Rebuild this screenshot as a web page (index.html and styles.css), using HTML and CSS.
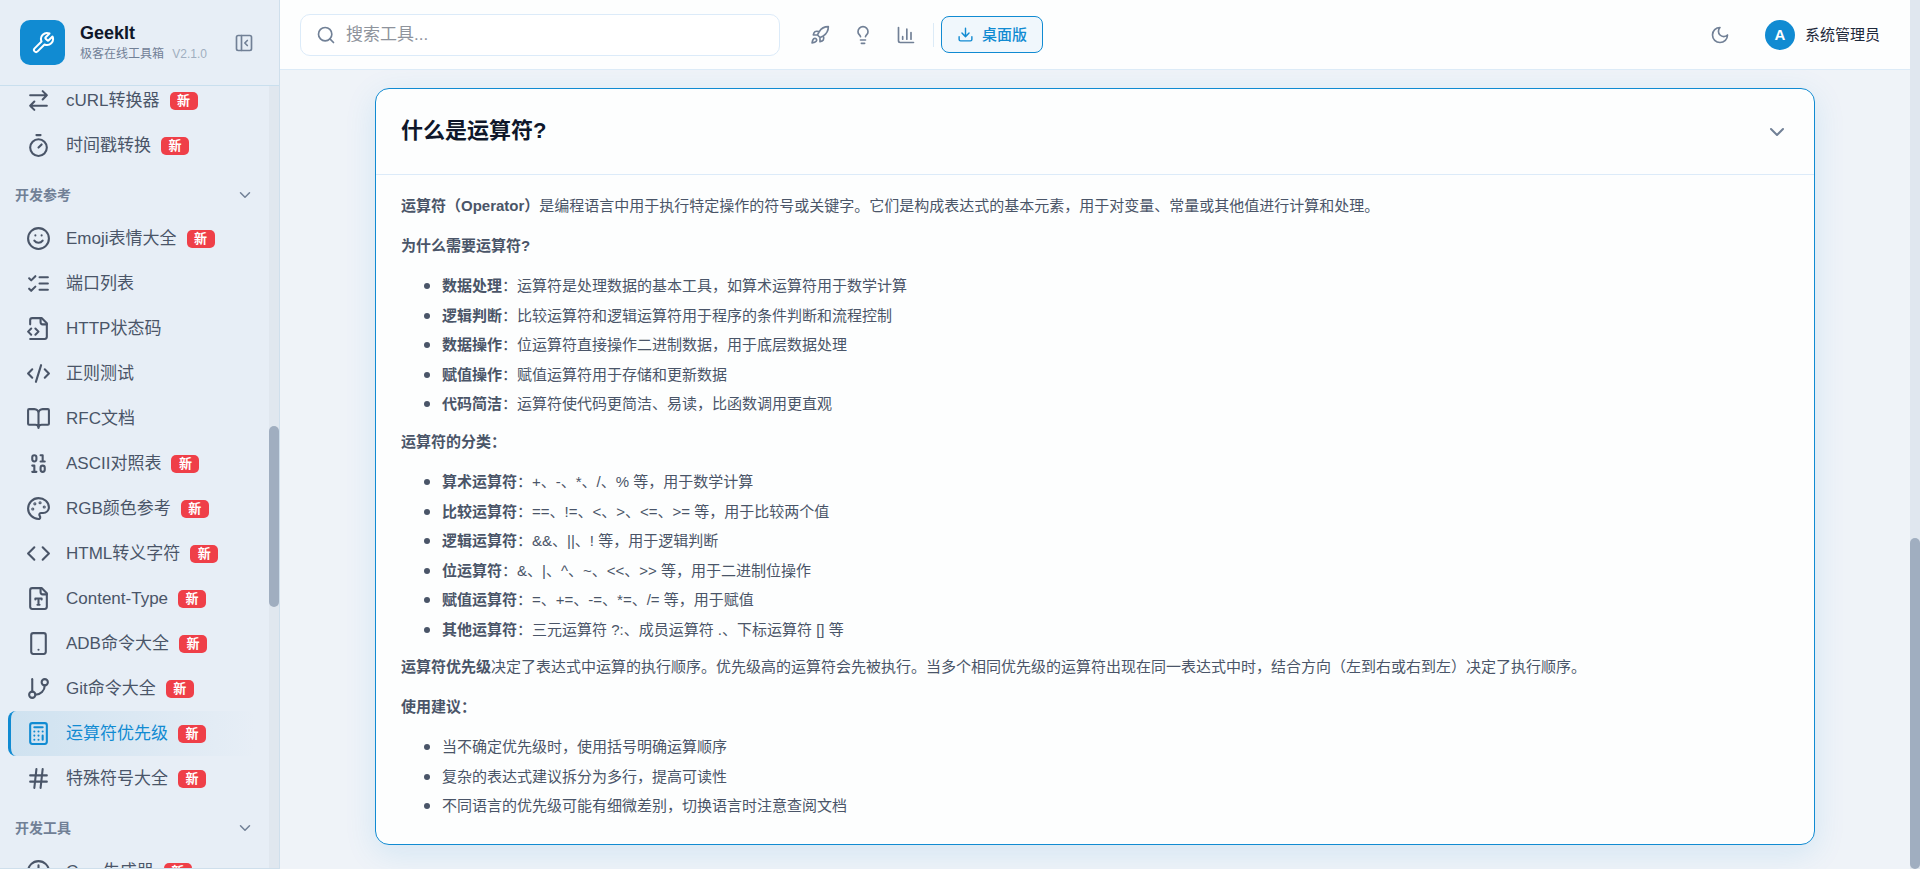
FILE: index.html
```html
<!DOCTYPE html>
<html lang="zh-CN">

<head>
    <meta charset="utf-8">
    <meta name="viewport" content="width=device-width, initial-scale=1.0">
    <title>运算符优先级 - GeekIt 极客在线工具箱</title>
    <link rel="stylesheet" href="styles.css">
</head>

<body>
<div class="app">

    <aside class="sidebar">
        <div class="sidebar-header">
            <a class="logo" href="#" aria-label="GeekIt">
                <svg class="icon" viewBox="0 0 24 24"><path d="M14.7 6.3a1 1 0 0 0 0 1.4l1.6 1.6a1 1 0 0 0 1.4 0l3.77-3.77a6 6 0 0 1-7.94 7.94l-6.91 6.91a2.12 2.12 0 0 1-3-3l6.91-6.91a6 6 0 0 1 7.94-7.94l-3.76 3.76z"/></svg>
            </a>
            <div class="brand">
                <div class="brand-name">GeekIt</div>
                <div class="brand-sub">极客在线工具箱 <span class="version">V2.1.0</span></div>
            </div>
            <button type="button" class="collapse-btn" aria-label="收起侧边栏">
                <svg class="icon" viewBox="0 0 24 24"><rect x="3" y="3" width="18" height="18" rx="2"/><path d="M9 3v18M16 15l-3-3 3-3"/></svg>
            </button>
        </div>

        <div class="sidebar-body">
            <nav class="nav">
                <a class="nav-item" href="#">
                    <svg class="icon" viewBox="0 0 24 24"><path d="m16 3 4 4-4 4M20 7H4M8 21l-4-4 4-4M4 17h16"/></svg>
                    <span>cURL转换器</span><em class="badge">新</em>
                </a>
                <a class="nav-item" href="#">
                    <svg class="icon" viewBox="0 0 24 24"><path d="M10 2h4M12 14l3-3"/><circle cx="12" cy="14" r="8"/></svg>
                    <span>时间戳转换</span><em class="badge">新</em>
                </a>

                <button type="button" class="nav-title">开发参考
                    <svg class="icon" viewBox="0 0 24 24"><path d="m6 9 6 6 6-6"/></svg>
                </button>
                <a class="nav-item" href="#">
                    <svg class="icon" viewBox="0 0 24 24"><circle cx="12" cy="12" r="10"/><path d="M8 14s1.5 2 4 2 4-2 4-2M9 9h.01M15 9h.01"/></svg>
                    <span>Emoji表情大全</span><em class="badge">新</em>
                </a>
                <a class="nav-item" href="#">
                    <svg class="icon" viewBox="0 0 24 24"><path d="m3 17 2 2 4-4M3 7l2 2 4-4M13 6h8M13 12h8M13 18h8"/></svg>
                    <span>端口列表</span>
                </a>
                <a class="nav-item" href="#">
                    <svg class="icon" viewBox="0 0 24 24"><path d="M4 22h14a2 2 0 0 0 2-2V7l-5-5H6a2 2 0 0 0-2 2v4"/><path d="M14 2v4a2 2 0 0 0 2 2h4M5 12l-3 3 3 3M9 18l3-3-3-3"/></svg>
                    <span>HTTP状态码</span>
                </a>
                <a class="nav-item" href="#">
                    <svg class="icon" viewBox="0 0 24 24"><path d="m18 16 4-4-4-4M6 8l-4 4 4 4M14.5 4l-5 16"/></svg>
                    <span>正则测试</span>
                </a>
                <a class="nav-item" href="#">
                    <svg class="icon" viewBox="0 0 24 24"><path d="M12 7v14M3 18a1 1 0 0 1-1-1V4a1 1 0 0 1 1-1h5a4 4 0 0 1 4 4 4 4 0 0 1 4-4h5a1 1 0 0 1 1 1v13a1 1 0 0 1-1 1h-6a3 3 0 0 0-3 3 3 3 0 0 0-3-3z"/></svg>
                    <span>RFC文档</span>
                </a>
                <a class="nav-item" href="#">
                    <svg class="icon" viewBox="0 0 24 24"><rect x="14" y="14" width="4" height="6" rx="2"/><rect x="6" y="4" width="4" height="6" rx="2"/><path d="M6 20h4M14 10h4M6 14h2v6M14 4h2v6"/></svg>
                    <span>ASCII对照表</span><em class="badge">新</em>
                </a>
                <a class="nav-item" href="#">
                    <svg class="icon" viewBox="0 0 24 24"><circle class="dot" cx="13.5" cy="6.5" r=".5"/><circle class="dot" cx="17.5" cy="10.5" r=".5"/><circle class="dot" cx="8.5" cy="7.5" r=".5"/><circle class="dot" cx="6.5" cy="12.5" r=".5"/><path d="M12 2C6.5 2 2 6.5 2 12s4.5 10 10 10c.926 0 1.648-.746 1.648-1.688 0-.437-.18-.835-.437-1.125-.29-.289-.438-.652-.438-1.125a1.64 1.64 0 0 1 1.668-1.668h1.996c3.051 0 5.555-2.503 5.555-5.554C21.965 6.012 17.461 2 12 2z"/></svg>
                    <span>RGB颜色参考</span><em class="badge">新</em>
                </a>
                <a class="nav-item" href="#">
                    <svg class="icon" viewBox="0 0 24 24"><path d="m16 18 6-6-6-6M8 6l-6 6 6 6"/></svg>
                    <span>HTML转义字符</span><em class="badge">新</em>
                </a>
                <a class="nav-item" href="#">
                    <svg class="icon" viewBox="0 0 24 24"><path d="M15 2H6a2 2 0 0 0-2 2v16a2 2 0 0 0 2 2h12a2 2 0 0 0 2-2V7z"/><path d="M14 2v4a2 2 0 0 0 2 2h4M9 13v-1h6v1M12 12v6M11 18h2"/></svg>
                    <span>Content-Type</span><em class="badge">新</em>
                </a>
                <a class="nav-item" href="#">
                    <svg class="icon" viewBox="0 0 24 24"><rect x="5" y="2" width="14" height="20" rx="2"/><path d="M12 18h.01"/></svg>
                    <span>ADB命令大全</span><em class="badge">新</em>
                </a>
                <a class="nav-item" href="#">
                    <svg class="icon" viewBox="0 0 24 24"><path d="M6 3v12"/><circle cx="18" cy="6" r="3"/><circle cx="6" cy="18" r="3"/><path d="M18 9a9 9 0 0 1-9 9"/></svg>
                    <span>Git命令大全</span><em class="badge">新</em>
                </a>
                <a class="nav-item active" href="#">
                    <svg class="icon" viewBox="0 0 24 24"><rect x="4" y="2" width="16" height="20" rx="2"/><path d="M8 6h8M16 14v4M16 10h.01M12 10h.01M8 10h.01M12 14h.01M8 14h.01M12 18h.01M8 18h.01"/></svg>
                    <span>运算符优先级</span><em class="badge">新</em>
                </a>
                <a class="nav-item" href="#">
                    <svg class="icon" viewBox="0 0 24 24"><path d="M4 9h16M4 15h16M10 3 8 21M16 3l-2 18"/></svg>
                    <span>特殊符号大全</span><em class="badge">新</em>
                </a>

                <button type="button" class="nav-title">开发工具
                    <svg class="icon" viewBox="0 0 24 24"><path d="m6 9 6 6 6-6"/></svg>
                </button>
                <a class="nav-item" href="#">
                    <svg class="icon" viewBox="0 0 24 24"><circle cx="12" cy="12" r="10"/><path d="M12 6v6l4 2"/></svg>
                    <span>Cron生成器</span><em class="badge">新</em>
                </a>
            </nav>
            <div class="scrollbar sidebar-scroll"><div class="thumb"></div></div>
        </div>
    </aside>

    <div class="main">
        <header class="topbar">
            <label class="search">
                <svg class="icon" viewBox="0 0 24 24"><circle cx="11" cy="11" r="8"/><path d="m21 21-4.3-4.3"/></svg>
                <input type="text" placeholder="搜索工具..." aria-label="搜索工具">
            </label>
            <div class="quick">
                <button type="button" class="icon-btn" aria-label="启动">
                    <svg class="icon" viewBox="0 0 24 24"><path d="M4.500 16.500c-1.500 1.260-2 5-2 5s3.740-.5 5-2c.71-.84.7-2.130-.09-2.910a2.180 2.180 0 0 0-2.910-.09zM12 15l-3-3a22 22 0 0 1 2-3.950A12.880 12.880 0 0 1 22 2c0 2.720-.78 7.500-6 11a22.350 22.350 0 0 1-4 2zM9 12H4s.55-3.030 2-4c1.620-1.080 5 0 5 0M12 15v5s3.030-.55 4-2c1.080-1.620 0-5 0-5"/></svg>
                </button>
                <button type="button" class="icon-btn" aria-label="建议">
                    <svg class="icon" viewBox="0 0 24 24"><path d="M15 14c.2-1 .7-1.700 1.500-2.500 1-.9 1.500-2.200 1.500-3.500A6 6 0 0 0 6 8c0 1 .2 2.200 1.500 3.500.7.7 1.300 1.500 1.500 2.500M9 18h6M10 22h4"/></svg>
                </button>
                <button type="button" class="icon-btn" aria-label="统计">
                    <svg class="icon" viewBox="0 0 24 24"><path d="M3 3v16a2 2 0 0 0 2 2h16M18 17V9M13 17V5M8 17v-3"/></svg>
                </button>
            </div>
            <button type="button" class="desktop-btn">
                <svg class="icon" viewBox="0 0 24 24"><path d="M21 15v4a2 2 0 0 1-2 2H5a2 2 0 0 1-2-2v-4M7 10l5 5 5-5M12 15V3"/></svg>
                桌面版
            </button>
            <div class="user-area">
                <button type="button" class="icon-btn" aria-label="深色模式">
                    <svg class="icon" viewBox="0 0 24 24"><path d="M12 3a6 6 0 0 0 9 9 9 9 0 1 1-9-9z"/></svg>
                </button>
                <a class="user" href="#"><span class="avatar">A</span>系统管理员</a>
            </div>
        </header>

        <main class="content">
            <section class="card">
                <div class="card-header">
                    <h2>什么是运算符?</h2>
                    <button type="button" class="toggle" aria-label="展开或收起">
                        <svg class="icon" viewBox="0 0 24 24"><path d="m6 9 6 6 6-6"/></svg>
                    </button>
                </div>
                <div class="card-body">
                    <p><strong>运算符（Operator）</strong>是编程语言中用于执行特定操作的符号或关键字。它们是构成表达式的基本元素，用于对变量、常量或其他值进行计算和处理。</p>
                    <p><strong>为什么需要运算符?</strong></p>
                    <ul>
                        <li><strong>数据处理</strong>：运算符是处理数据的基本工具，如算术运算符用于数学计算</li>
                        <li><strong>逻辑判断</strong>：比较运算符和逻辑运算符用于程序的条件判断和流程控制</li>
                        <li><strong>数据操作</strong>：位运算符直接操作二进制数据，用于底层数据处理</li>
                        <li><strong>赋值操作</strong>：赋值运算符用于存储和更新数据</li>
                        <li><strong>代码简洁</strong>：运算符使代码更简洁、易读，比函数调用更直观</li>
                    </ul>
                    <p><strong>运算符的分类：</strong></p>
                    <ul>
                        <li><strong>算术运算符</strong>：+、-、*、/、% 等，用于数学计算</li>
                        <li><strong>比较运算符</strong>：==、!=、&lt;、&gt;、&lt;=、&gt;= 等，用于比较两个值</li>
                        <li><strong>逻辑运算符</strong>：&amp;&amp;、||、! 等，用于逻辑判断</li>
                        <li><strong>位运算符</strong>：&amp;、|、^、~、&lt;&lt;、&gt;&gt; 等，用于二进制位操作</li>
                        <li><strong>赋值运算符</strong>：=、+=、-=、*=、/= 等，用于赋值</li>
                        <li><strong>其他运算符</strong>：三元运算符 ?:、成员运算符 .、下标运算符 [] 等</li>
                    </ul>
                    <p><strong>运算符优先级</strong>决定了表达式中运算的执行顺序。优先级高的运算符会先被执行。当多个相同优先级的运算符出现在同一表达式中时，结合方向（左到右或右到左）决定了执行顺序。</p>
                    <p><strong>使用建议：</strong></p>
                    <ul>
                        <li>当不确定优先级时，使用括号明确运算顺序</li>
                        <li>复杂的表达式建议拆分为多行，提高可读性</li>
                        <li>不同语言的优先级可能有细微差别，切换语言时注意查阅文档</li>
                    </ul>
                </div>
            </section>
        </main>
    </div>

    <div class="scrollbar page-scroll"><div class="thumb"></div></div>
</div>
</body>

</html>
```
FILE: styles.css
```css
* {
    box-sizing: border-box;
}

body {
    margin: 0;
    background: #eff3f8;
    color: #4a5568;
    font-family: "Liberation Sans", "Noto Sans CJK SC", sans-serif;
    font-size: 15px;
}

button,
input {
    font: inherit;
    color: inherit;
    background: none;
    border: 0;
    padding: 0;
}

button {
    cursor: pointer;
}

a {
    color: inherit;
    text-decoration: none;
}

.icon {
    display: block;
    flex: none;
    width: 20px;
    height: 20px;
    fill: none;
    stroke: currentColor;
    stroke-width: 2;
    stroke-linecap: round;
    stroke-linejoin: round;
}

.icon .dot {
    fill: currentColor;
}

.app {
    display: flex;
    height: 100vh;
    overflow: hidden;
}

/* sidebar */
.sidebar {
    display: flex;
    flex-direction: column;
    flex: none;
    width: 280px;
    background: #e7eef6;
    border-right: 1px solid #cfdfec;
    border-bottom: 1px solid #cfdfec;
}

.sidebar-header {
    display: flex;
    align-items: center;
    flex: none;
    height: 86px;
    padding: 0 23px 0 20px;
    border-bottom: 1px solid #c9dfee;
}

.logo {
    display: flex;
    align-items: center;
    justify-content: center;
    width: 45px;
    height: 45px;
    margin-right: 15px;
    border-radius: 10px;
    background: #118bd2;
    color: #fff;
}

.logo .icon {
    width: 24px;
    height: 24px;
}

.brand {
    flex: 1;
    white-space: nowrap;
}

.brand-name {
    color: #0f172a;
    font-size: 18px;
    font-weight: 700;
    line-height: 22px;
}

.brand-sub {
    color: #718096;
    font-size: 12px;
    line-height: 20px;
}

.version {
    margin-left: 5px;
    color: #a0aec0;
}

.collapse-btn {
    padding: 2px;
    color: #718096;
}

.sidebar-body {
    display: flex;
    flex: 1;
    min-height: 0;
}

.nav {
    flex: 1;
    overflow: hidden;
    padding: 0 13px 0 8px;
}

.nav-item:first-child {
    margin-top: -8px;
}

.nav-item {
    display: flex;
    align-items: center;
    height: 45px;
    padding-left: 15px;
    border-left: 3px solid transparent;
    border-radius: 8px;
    font-size: 17px;
    line-height: 24px;
    white-space: nowrap;
}

.nav-item .icon {
    width: 25px;
    height: 25px;
    margin-right: 15px;
}

.nav-item.active {
    border-left-color: #118bd2;
    background: linear-gradient(90deg, #cfe2f0, #e7eef6);
    color: #118bd2;
}

.badge {
    flex: none;
    width: 28px;
    height: 18px;
    margin-left: 10px;
    border-radius: 5px;
    background: #ef3f48;
    color: #fff;
    font-size: 13px;
    font-style: normal;
    font-weight: 700;
    line-height: 17px;
    text-align: center;
}

.nav-title {
    display: flex;
    align-items: center;
    justify-content: space-between;
    width: 100%;
    height: 48px;
    padding: 5px 2px 0 7px;
    color: #718096;
    font-size: 14px;
    font-weight: 600;
    line-height: 20px;
}

.nav-title .icon {
    width: 18px;
    height: 18px;
}

/* scrollbars */
.scrollbar {
    flex: none;
    width: 10px;
    background: #e0e7ef;
}

.thumb {
    border-radius: 5px;
    background: #a0aec0;
}

.sidebar-scroll {
    display: grid;
    grid-template-rows: 340fr 181fr 261fr;
}

.page-scroll {
    display: grid;
    grid-template-rows: 538fr 331fr;
}

.scrollbar .thumb {
    grid-row: 2;
}

/* top bar */
.main {
    display: flex;
    flex-direction: column;
    flex: 1;
    min-width: 0;
}

.topbar {
    display: flex;
    align-items: center;
    flex: none;
    height: 70px;
    padding: 0 30px 0 20px;
    background: #fdfefe;
    border-bottom: 1px solid #dcebf7;
    color: #718096;
    line-height: 22px;
}

.search {
    display: flex;
    align-items: center;
    width: 480px;
    height: 42px;
    padding: 0 15px;
    border: 1px solid #dcebf9;
    border-radius: 10px;
    background: #fff;
}

.search input {
    flex: 1;
    min-width: 0;
    margin-left: 10px;
    color: #4a5568;
    font-size: 17px;
    outline: none;
}

.search input::placeholder {
    color: #8e939c;
}

.quick {
    display: flex;
    align-items: center;
    gap: 3px;
    height: 24px;
    margin-left: 20px;
    padding-right: 7px;
    border-right: 1px solid #dcebf7;
}

.icon-btn {
    display: flex;
    align-items: center;
    justify-content: center;
    width: 40px;
    height: 40px;
}

.desktop-btn {
    display: flex;
    align-items: center;
    gap: 8px;
    height: 37px;
    margin-left: 7px;
    padding: 0 15px;
    border: 1px solid #118bd2;
    border-radius: 8px;
    background: #f0f7fc;
    color: #118bd2;
    font-weight: 500;
}

.desktop-btn .icon {
    width: 17px;
    height: 17px;
}

.user-area {
    display: flex;
    align-items: center;
    gap: 25px;
    margin-left: auto;
}

.user {
    display: flex;
    align-items: center;
    gap: 10px;
    color: #1e293b;
}

.avatar {
    width: 30px;
    height: 30px;
    border-radius: 50%;
    background: #118bd2;
    color: #fff;
    font-weight: 600;
    line-height: 30px;
    text-align: center;
}

/* content */
.content {
    flex: 1;
    min-height: 0;
    overflow: hidden;
    padding: 18px 40px 24px;
}

.card {
    max-width: 1440px;
    margin: 0 auto;
    border: 1px solid #118bd2;
    border-radius: 14px;
    background: #fdfefe;
    box-shadow: 0 8px 32px rgba(17, 139, 210, .12);
}

.card-header {
    display: flex;
    align-items: center;
    justify-content: space-between;
    height: 86px;
    padding: 0 25px;
    border-bottom: 1px solid #dcebf9;
}

.card-header h2 {
    margin: 0;
    padding-bottom: 2px;
    color: #0f172a;
    font-size: 22px;
    font-weight: 600;
    line-height: 32px;
}

.toggle {
    color: #718096;
}

.toggle .icon {
    width: 24px;
    height: 24px;
}

.card-body {
    padding: 18px 25px 13px;
    line-height: 1.7;
}

.card-body p {
    margin: 0 0 14px;
}

.card-body ul {
    margin: 0 0 12px;
    padding-left: 41px;
}

.card-body li + li {
    margin-top: 3px;
}

.card-body li::marker {
    font-family: "Noto Sans CJK SC", sans-serif;
}

.card-body strong {
    font-weight: 600;
}
```
